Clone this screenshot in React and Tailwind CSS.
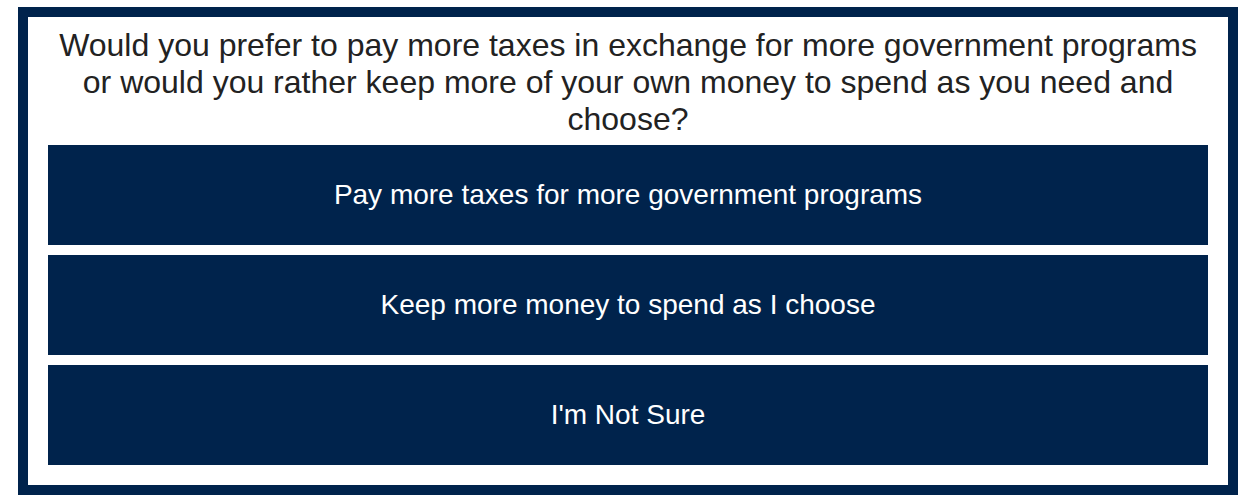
import React from 'react';

const options = [
  'Pay more taxes for more government programs',
  'Keep more money to spend as I choose',
  "I'm Not Sure",
];

export default function App() {
  return (
    <div className="w-[1257px] h-[498px] bg-white pt-[7px] pl-[18px]" style={{ fontFamily: '"Liberation Sans", Arial, sans-serif' }}>
      <div className="w-[1220px] h-[488px] border-[10px] border-[#00234c] px-[20px] pt-[10px]">
        <p className="text-[32px] leading-[37px] text-[#222] text-center">
          Would you prefer to pay more taxes in exchange for more government programs or would you rather keep more of your own money to spend as you need and choose?
        </p>
        <div className="mt-[7px] flex flex-col gap-[10px]">
          {options.map((o) => (
            <button
              key={o}
              className="h-[100px] w-full bg-[#00234c] text-white text-[28px] flex items-center justify-center"
            >
              {o}
            </button>
          ))}
        </div>
      </div>
    </div>
  );
}
